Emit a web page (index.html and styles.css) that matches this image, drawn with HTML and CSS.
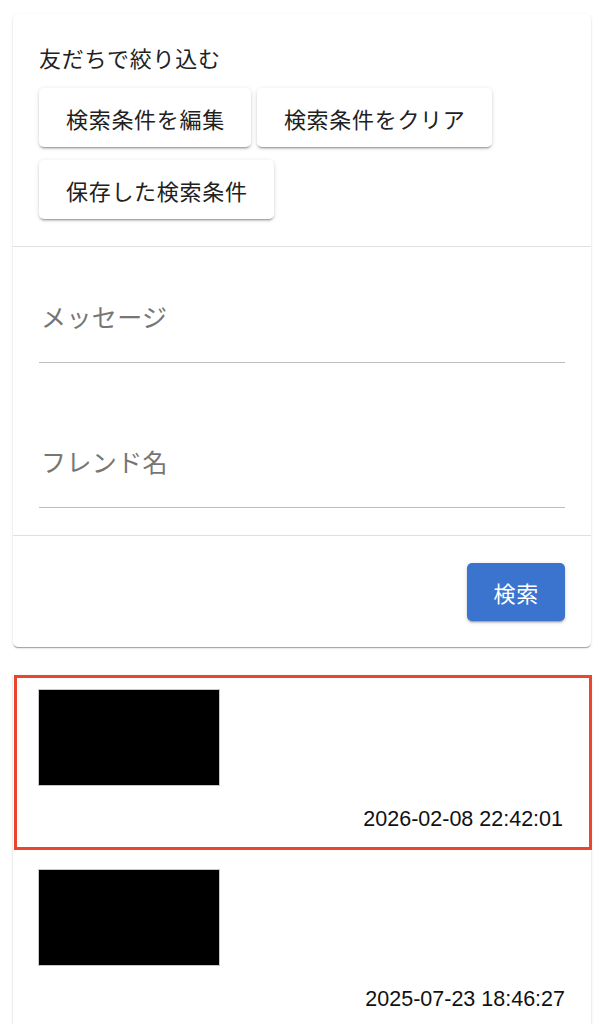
FILE: index.html
```html
<!DOCTYPE html>
<html lang="ja">
<head>
    <meta charset="UTF-8">
    <meta name="viewport" content="width=device-width, initial-scale=1.0">
    <title>検索</title>
    <link rel="stylesheet" href="styles.css">
</head>
<body>
    <div class="page">
        <div class="card searchCard">
            <div class="filterSection">
                <p class="filterTitle">友だちで絞り込む</p>
                <div class="buttonRow">
                    <button class="btn">検索条件を編集</button>
                    <button class="btn">検索条件をクリア</button>
                    <button class="btn">保存した検索条件</button>
                </div>
            </div>

            <div class="fieldSection">
                <div class="field">
                    <input type="text" placeholder="メッセージ">
                </div>
                <div class="field">
                    <input type="text" placeholder="フレンド名">
                </div>
            </div>

            <div class="actionSection">
                <button class="btn primary">検索</button>
            </div>
        </div>

        <div class="card resultList">
            <div class="resultItem selected">
                <div class="thumb"></div>
                <p class="date">2026-02-08 22:42:01</p>
            </div>
            <div class="resultItem">
                <div class="thumb"></div>
                <p class="date">2025-07-23 18:46:27</p>
            </div>
        </div>
    </div>
</body>
</html>
```

FILE: styles.css
```css
*{
    margin: 0;
    box-sizing: border-box;
}
body{
    background-color: #ffffff;
    font-family: "Noto Sans CJK JP", "Noto Sans", sans-serif;
    color: #212121;
}
.page{
    padding: 14px 11px 0 13px;
}
.card{
    background-color: #ffffff;
    border-radius: 5px;
    box-shadow: 0 2px 1px -1px rgba(0,0,0,0.2), 0 1px 1px 0 rgba(0,0,0,0.14), 0 1px 3px 0 rgba(0,0,0,0.12);
}
.filterSection{
    padding: 28px 26px 27px;
    border-bottom: 1px solid #e0e0e0;
}
.filterTitle{
    font-size: 22px;
    line-height: 30px;
    letter-spacing: 0.7px;
    margin-bottom: 16px;
}
.buttonRow{
    display: flex;
    flex-wrap: wrap;
    column-gap: 6px;
    row-gap: 13px;
}
.btn{
    font-family: "Noto Sans CJK JP", "Noto Sans", sans-serif;
    font-size: 22px;
    letter-spacing: 0.7px;
    color: #212121;
    height: 59px;
    padding: 0 26px 0 27px;
    border: none;
    border-radius: 5px;
    background-color: #ffffff;
    box-shadow: 0 3px 1px -2px rgba(0,0,0,0.2), 0 2px 2px 0 rgba(0,0,0,0.14), 0 1px 5px 0 rgba(0,0,0,0.12);
}
.fieldSection{
    padding: 0 26px 27px;
    border-bottom: 1px solid #e0e0e0;
}
.field{
    padding-top: 54px;
    padding-bottom: 31px;
    border-bottom: 1px solid #bdbdbd;
}
.field + .field{
    margin-top: 29px;
}
.field input{
    display: block;
    width: 100%;
    height: 30px;
    padding: 0 0 0 2px;
    border: none;
    outline: none;
    font-family: "Noto Sans CJK JP", "Noto Sans", sans-serif;
    font-size: 25px;
    letter-spacing: 0.4px;
    color: #212121;
    background: transparent;
}
.field input::placeholder{
    color: #767676;
}
.actionSection{
    display: flex;
    justify-content: flex-end;
    padding: 27px 26px 26px;
}
.btn.primary{
    height: 58px;
    padding: 0 26px 0 27px;
    background-color: #3b74cf;
    color: #ffffff;
}
.resultList{
    margin-top: 28px;
    border-radius: 0;
}
.resultItem{
    padding: 19px 26px 15px 25px;
}
.resultItem.selected{
    border: 3px solid #e9462d;
    margin-left: 1px;
    margin-right: -1px;
    padding: 11px 26px 16px 21px;
}
.thumb{
    width: 182px;
    height: 97px;
    background-color: #000000;
    border: 1px solid #c8c8c8;
}
.date{
    margin-top: 21px;
    text-align: right;
    font-family: "Liberation Sans", Arial, sans-serif;
    font-size: 21.5px;
    line-height: 24px;
    color: #111111;
}
```
